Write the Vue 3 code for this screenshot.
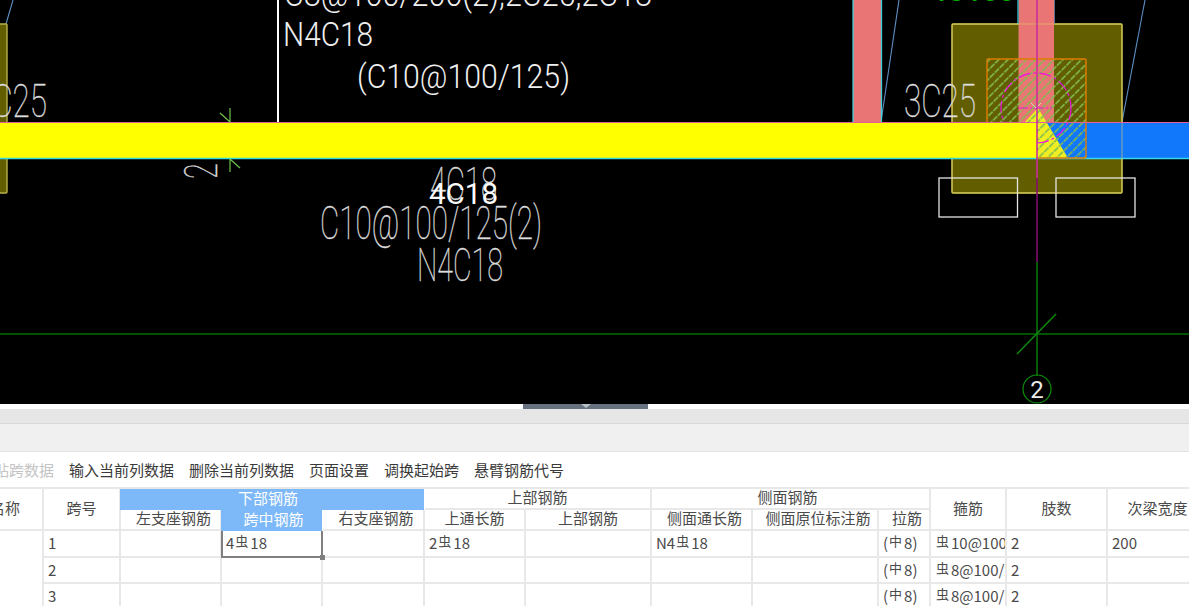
<script setup>
const tools = [
  { label: '粘贴跨数据', off: true },
  { label: '输入当前列数据' },
  { label: '删除当前列数据' },
  { label: '页面设置' },
  { label: '调换起始跨' },
  { label: '悬臂钢筋代号' }
]

const headers = [
  { t: '名称', c: 1, r: 1, cs: 1, rs: 2 },
  { t: '跨号', c: 2, r: 1, cs: 1, rs: 2 },
  { t: '下部钢筋', c: 3, r: 1, cs: 3, rs: 1, on: true, back: true },
  { t: '上部钢筋', c: 6, r: 1, cs: 2, rs: 1 },
  { t: '侧面钢筋', c: 8, r: 1, cs: 3, rs: 1, back: true },
  { t: '箍筋', c: 11, r: 1, cs: 1, rs: 2 },
  { t: '肢数', c: 12, r: 1, cs: 1, rs: 2 },
  { t: '次梁宽度', c: 13, r: 1, cs: 1, rs: 2 },
  { t: '左支座钢筋', c: 3, r: 2, fwd: true },
  { t: '跨中钢筋', c: 4, r: 2, on: true, fwd: true },
  { t: '右支座钢筋', c: 5, r: 2, fwd: true },
  { t: '上通长筋', c: 6, r: 2 },
  { t: '上部钢筋', c: 7, r: 2 },
  { t: '侧面通长筋', c: 8, r: 2, fwd: true },
  { t: '侧面原位标注筋', c: 9, r: 2, fwd: true },
  { t: '拉筋', c: 10, r: 2, fwd: true }
]

const rows = [
  { no: 1, mid: ['4', '虫', '18'], top: ['2', '虫', '18'], side: ['N4', '虫', '18'], tie: ['(', '中', '8)'], stir: ['', '虫', '10@100/125(2)'], legs: '2', w: '200' },
  { no: 2, tie: ['(', '中', '8)'], stir: ['', '虫', '8@100/200(2)'], legs: '2' },
  { no: 3, tie: ['(', '中', '8)'], stir: ['', '虫', '8@100/200(2)'], legs: '2' }
]

function place(h) {
  return {
    gridColumn: `${h.c} / span ${h.cs || 1}`,
    gridRow: `${h.r} / span ${h.rs || 1}`
  }
}

function cells(row) {
  return [
    { key: 'no', v: [String(row.no), '', ''] },
    { key: 'l', v: null },
    { key: 'mid', v: row.mid, sel: row.no === 1 },
    { key: 'r', v: null },
    { key: 'top', v: row.top },
    { key: 'up', v: null },
    { key: 'side', v: row.side },
    { key: 'orig', v: null },
    { key: 'tie', v: row.tie },
    { key: 'stir', v: row.stir },
    { key: 'legs', v: [row.legs, '', ''] },
    { key: 'w', v: row.w ? [row.w, '', ''] : null }
  ]
}
</script>

<template>
  <div class="page">
    <svg class="cad" width="1189" height="404" viewBox="0 0 1189 404">
      <defs>
        <pattern id="hatch" width="6.5" height="7" patternUnits="userSpaceOnUse" patternTransform="rotate(45)">
          <line x1="0" y1="0" x2="0" y2="7" stroke="#80bc50" stroke-width="3.4" stroke-dasharray="6 1" />
        </pattern>
      </defs>

      <!-- grid lines -->
      <line x1="0" y1="334" x2="1189" y2="334" stroke="#006c00" stroke-width="1.5" />
      <line x1="1037" y1="262" x2="1037" y2="376" stroke="#087a08" stroke-width="1.5" />
      <line x1="1017" y1="354" x2="1056" y2="314" stroke="#0a8a0a" stroke-width="1.5" />
      <circle cx="1037" cy="389" r="14" fill="none" stroke="#0a8f0a" stroke-width="1.2" />
      <text class="axis" x="1037" y="398" text-anchor="middle">2</text>

      <!-- diagonals -->
      <line x1="899" y1="0" x2="881" y2="122" stroke="#5d8fc4" stroke-width="1.1" />
      <line x1="1145" y1="0" x2="1122" y2="122" stroke="#5d8fc4" stroke-width="1.1" />
      <line x1="13" y1="0" x2="6" y2="24" stroke="#5d8fc4" stroke-width="1.1" />
      <line x1="278" y1="0" x2="278" y2="122" stroke="#fff" stroke-width="2" />

      <!-- columns -->
      <rect x="-10" y="24" width="17" height="169" fill="#625e00" stroke="#b8b24a" stroke-width="1.4" rx="1" />
      <rect x="952" y="24" width="170" height="169" fill="#625e00" stroke="#c8c050" stroke-width="1.4" rx="1" />

      <!-- pink beams -->
      <rect x="853" y="0" width="28" height="122" fill="#ea7575" />
      <line x1="853" y1="0" x2="853" y2="122" stroke="#39d2dc" stroke-width="1.3" />
      <line x1="881.5" y1="0" x2="881.5" y2="122" stroke="#39d2dc" stroke-width="1.3" />
      <rect x="1018.5" y="0" width="35.5" height="122" fill="#ea7575" />
      <line x1="1018" y1="0" x2="1018" y2="24" stroke="#39d2dc" stroke-width="1.2" />
      <line x1="1054.5" y1="0" x2="1054.5" y2="24" stroke="#5a6e90" stroke-width="1" />

      <!-- blue beam -->
      <rect x="1037" y="123" width="152" height="35" fill="#1177fb" />
      <line x1="1037" y1="158.5" x2="1189" y2="158.5" stroke="#35d8f0" stroke-width="1.3" />

      <!-- triangle -->
      <polygon points="1038,108 1068,158 1037,158 1025,122" fill="#eeee22" />

      <!-- hatch -->
      <rect x="987" y="59" width="99" height="99" fill="url(#hatch)" opacity="0.92" />
      <rect x="987" y="59" width="99" height="99" fill="none" stroke="#e07c00" stroke-width="1.4" rx="1" />

      <circle cx="1036" cy="108" r="35" fill="none" stroke="#ee10e0" stroke-width="1.2" stroke-dasharray="12 3 3 3" />
      <line x1="1018" y1="108" x2="1052" y2="108" stroke="#ee10e0" stroke-width="1.2" stroke-dasharray="10 2 2 2" />
      <path d="M1031 103 L1036 108 L1041 103" fill="none" stroke="#d8d8c0" stroke-width="1" />

      <!-- column outline over beams -->
      <rect x="952" y="24" width="170" height="169" fill="none" stroke="#e0d060" stroke-width="1" opacity="0.6" rx="1" />

      <!-- yellow beam -->
      <rect x="0" y="123" width="1037" height="35" fill="#ffff00" />
      <line x1="0" y1="122.5" x2="1189" y2="122.5" stroke="#e0609a" stroke-width="1.2" />
      <line x1="0" y1="158.5" x2="1037" y2="158.5" stroke="#35d8e0" stroke-width="1.3" />

      <!-- axis over everything -->
      <line x1="1037" y1="0" x2="1037" y2="178" stroke="#c92e9e" stroke-width="1.6" />
      <line x1="1037" y1="178" x2="1037" y2="262" stroke="#8a0a78" stroke-width="1.5" />

      <!-- ticks -->
      <g stroke="#6cc24a" stroke-width="1.2" fill="none">
        <path d="M230 108 V122 M220 113 L230 122" />
        <path d="M230 159 V172 M230 159 L240 168" />
      </g>

      <!-- annotation -->
      <text class="thin" transform="translate(217,179) rotate(-90)" textLength="16" lengthAdjust="spacingAndGlyphs">2</text>
      <text class="green" x="930" y="1" textLength="85" lengthAdjust="spacingAndGlyphs">4C100</text>
      <text class="plain" x="284" y="6" textLength="368" lengthAdjust="spacingAndGlyphs">C8@100/200(2);2C25,2C18</text>
      <text class="plain" x="283" y="46" textLength="90" lengthAdjust="spacingAndGlyphs">N4C18</text>
      <text class="plain" x="357" y="88" textLength="213" lengthAdjust="spacingAndGlyphs">(C10@100/125)</text>
      <text class="thin" x="-25" y="117" textLength="72" lengthAdjust="spacingAndGlyphs">3C25</text>
      <text class="thin" x="904" y="117" textLength="72" lengthAdjust="spacingAndGlyphs">3C25</text>
      <text class="thin" x="430" y="200" textLength="67" lengthAdjust="spacingAndGlyphs">4C18</text>
      <text class="heavy" x="429" y="204" textLength="69" lengthAdjust="spacingAndGlyphs">4C18</text>
      <text class="thin" x="320" y="239" textLength="222" lengthAdjust="spacingAndGlyphs">C10@100/125(2)</text>
      <text class="thin" x="417" y="281" textLength="86" lengthAdjust="spacingAndGlyphs">N4C18</text>

      <!-- footings -->
      <rect x="939" y="178" width="78.5" height="39" fill="none" stroke="#e4e4e4" stroke-width="1.3" />
      <rect x="1056" y="178" width="79" height="39" fill="none" stroke="#e4e4e4" stroke-width="1.3" />
    </svg>

    <div class="splitter">
      <div class="handle"><span class="arrow"></span></div>
    </div>
    <div class="tabs"></div>
    <div class="ribbon"></div>

    <div class="toolbar">
      <span v-for="t in tools" :key="t.label" class="tool" :class="{ off: t.off }">{{ t.label }}</span>
    </div>

    <div class="grid">
      <div
        v-for="h in headers"
        :key="h.c + '-' + h.r"
        class="hd"
        :class="{ on: h.on, fwd: h.fwd, back: h.back }"
        :style="place(h)"
      >{{ h.t }}</div>

      <div class="namecol"></div>

      <template v-for="row in rows" :key="row.no">
        <div
          v-for="cell in cells(row)"
          :key="cell.key"
          class="td"
          :class="{ sel: cell.sel }"
        >
          <template v-if="cell.v">{{ cell.v[0] }}<span v-if="cell.v[1]" class="bar">{{ cell.v[1] }}</span>{{ cell.v[2] }}</template>
          <i v-if="cell.sel" class="dot"></i>
        </div>
      </template>
    </div>
  </div>
</template>

<style>
html, body { margin: 0; background: #fff; overflow: hidden; }
</style>

<style scoped>
.page {
  width: 1189px;
  height: 606px;
  overflow: hidden;
  display: flex;
  flex-direction: column;
  background: #fff;
  font-family: "Noto Sans CJK SC", "Noto Sans", sans-serif;
  font-size: 15px;
  color: #444;
}
.cad { display: block; flex: none; background: #000; }
.cad text { font-family: Roboto, "Liberation Sans", sans-serif; opacity: 0.99; }
.thin { font-size: 47px; font-weight: 100; fill: #e4e4e4; stroke: #d8d8d8; stroke-width: 0.35px; }
.plain { font-size: 33px; font-weight: 300; fill: #f2f2f2; }
.heavy { font-size: 30px; font-weight: 400; fill: #fff; }
.green { font-size: 30px; font-weight: 500; fill: #00b400; }
.axis { font-size: 24px; font-weight: 400; fill: #eee; }

.splitter {
  flex: none;
  height: 5px;
  box-sizing: border-box;
  padding-right: 18px;
  display: flex;
  justify-content: center;
  background: #fff;
}
.handle {
  width: 125px;
  height: 5px;
  background: #667280;
  display: flex;
  justify-content: center;
}
.arrow {
  width: 0;
  height: 0;
  border-left: 5px solid transparent;
  border-right: 5px solid transparent;
  border-top: 4px solid #b9bfc6;
}
.tabs {
  flex: none;
  height: 14px;
  background: #e6e6e6;
  border-bottom: 1px solid #d8d8d8;
}
.ribbon {
  flex: none;
  height: 27px;
  background: #f0f0f0;
  border-bottom: 1px solid #e4e4e4;
}
.toolbar {
  flex: none;
  height: 36px;
  box-sizing: border-box;
  padding-bottom: 2px;
  display: flex;
  align-items: center;
  gap: 15px;
  margin-left: -21px;
  white-space: nowrap;
  color: #3a3a3a;
}
.tool.off { color: #c4c4c4; }

.grid {
  flex: none;
  margin-left: -32px;
  display: grid;
  grid-template-columns: 76px 77px 101px 101px 102px 101px 126px 101px 126px 52px 76px 101px 101px;
  grid-template-rows: 21px 21px 27px 26px 25px;
  border-top: 2px solid #e8e8e8;
  margin-top: -1px;
  width: 1241px;
}
.hd {
  box-sizing: border-box;
  display: flex;
  align-items: center;
  justify-content: center;
  padding-bottom: 4px;
  border-right: 2px solid #e8e8e8;
  border-bottom: 2px solid #e8e8e8;
  line-height: 1;
  white-space: nowrap;
  overflow: hidden;
  color: #4a4a4a;
}
.hd.fwd { padding-left: 6px; }
.hd.back { padding-right: 6px; }
.hd.on {
  margin-left: -1px;
  margin-right: 1px;
  background: #7db8f8;
  color: #fff;
  border-right-color: #7db8f8;
  border-bottom: 0;
}
.namecol {
  grid-column: 1;
  grid-row: 3 / span 3;
  border-right: 2px solid #e8e8e8;
}
.td {
  position: relative;
  box-sizing: border-box;
  border-right: 2px solid #e8e8e8;
  border-bottom: 2px solid #e8e8e8;
  padding-left: 4px;
  line-height: 23px;
  white-space: nowrap;
  overflow: hidden;
  color: #4a4a4a;
}
.td.sel {
  overflow: visible;
  z-index: 2;
  margin-left: -1px;
  border-left: 2px solid #7f7f7f;
  border-right: 2px solid #7f7f7f;
  border-bottom: 2px solid #7f7f7f;
  padding-left: 3px;
}
.bar {
  display: inline-block;
  font-size: 13px;
  margin: 0 2px 0 1px;
  position: relative;
  top: -3px;
}
.dot {
  position: absolute;
  right: -4px;
  bottom: -4px;
  width: 5px;
  height: 5px;
  background: #7f7f7f;
}
</style>
